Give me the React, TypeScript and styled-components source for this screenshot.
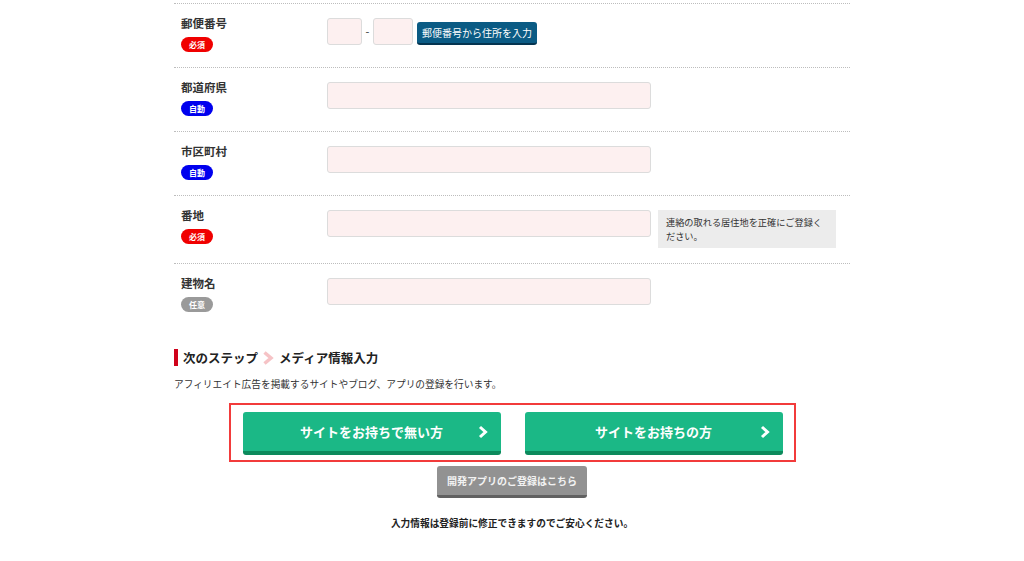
import React from "react";
import styled, { createGlobalStyle } from "styled-components";

const Global = createGlobalStyle`
  html, body { margin: 0; padding: 0; background: #fff; }
  body { font-family: "Noto Sans CJK JP", "Noto Sans", sans-serif; color: #333; }
  * { box-sizing: border-box; }
`;

const Page = styled.div`
  width: 676px;
  margin: 0 auto;
  padding-top: 3px;
  padding-bottom: 40px;
`;

const Row = styled.div`
  display: grid;
  grid-template-columns: 153px 1fr;
  border-top: 1px dotted #bdbdbd;
  padding: 14px 0 15px;
  align-items: start;
`;

const LabelCol = styled.div`
  margin-top: -3px;
  padding-left: 7px;
  display: flex;
  flex-direction: column;
  align-items: flex-start;
`;

const LabelText = styled.div`
  font-size: 11.5px;
  font-weight: 700;
  line-height: 16px;
  color: #333;
`;

const badgeColors = { req: "#f00000", auto: "#0000ee", opt: "#9a9a9a" };

const Badge = styled.span<{ $kind: keyof typeof badgeColors }>`
  margin-top: 6px;
  display: inline-flex;
  align-items: center;
  justify-content: center;
  width: 32px;
  height: 15px;
  border-radius: 8px;
  background: ${(p) => badgeColors[p.$kind]};
  color: #fff;
  font-size: 8px;
  font-weight: 700;
  line-height: 1;
`;

const FieldCol = styled.div`
  display: flex;
  align-items: flex-start;
  gap: 7px;
`;

const ZipLine = styled.div`
  display: flex;
  align-items: flex-end;
`;

const Input = styled.div<{ $w: number }>`
  width: ${(p) => p.$w}px;
  height: 27px;
  background: #fdf0f0;
  border: 1px solid #dcdcdc;
  border-radius: 3px;
  flex: none;
`;

const Dash = styled.span`
  width: 11px;
  text-align: center;
  font-size: 11px;
  line-height: 27px;
  align-self: flex-start;
  color: #333;
`;

const ZipButton = styled.button`
  margin-left: 4px;
  height: 23px;
  padding: 0 5px;
  background: #0b5b84;
  border: none;
  border-bottom: 2px solid #043450;
  border-radius: 3px;
  color: #fff;
  font-family: inherit;
  font-size: 10px;
  line-height: 21px;
  white-space: nowrap;
`;

const Note = styled.div`
  width: 178px;
  background: #ececec;
  padding: 5px 12px 5px 8px;
  font-size: 9.2px;
  line-height: 14px;
  color: #333;
`;

const Heading = styled.h2`
  margin: 22px 0 0;
  display: flex;
  align-items: center;
  font-size: 12.5px;
  font-weight: 700;
  color: #222;
  line-height: 17px;
  border-left: 4px solid #d0021b;
  padding-left: 5px;
  height: 17px;
`;

const Chevron = styled.svg`
  margin: 0 5px 0 4px;
`;

const Desc = styled.p`
  margin: 11px 0 0;
  font-size: 9.7px;
  line-height: 14px;
  color: #333;
`;

const Highlight = styled.div`
  margin: 12px auto 0;
  width: 567px;
  border: 2px solid #f23b3b;
  padding: 7px 11px 5px 12px;
  display: flex;
  justify-content: space-between;
`;

const GreenButton = styled.button`
  position: relative;
  width: 258px;
  height: 43px;
  background: #1bb886;
  border: none;
  border-bottom: 4px solid #0c8a5c;
  border-radius: 3px;
  color: #fff;
  font-family: inherit;
  font-size: 13px;
  font-weight: 700;
  display: flex;
  align-items: center;
  justify-content: center;
  padding: 0;
`;

const Arrow = styled.svg`
  position: absolute;
  right: 13px;
  top: 50%;
  transform: translateY(-50%);
`;

const Center = styled.div`
  display: flex;
  flex-direction: column;
  align-items: center;
`;

const GrayButton = styled.button`
  margin-top: 4px;
  width: 150px;
  height: 32px;
  background: #929292;
  border: none;
  border-bottom: 3px solid #616161;
  border-radius: 3px;
  color: #f2f2f2;
  font-family: inherit;
  font-size: 10px;
  font-weight: 700;
  padding: 0;
`;

const Footer = styled.p`
  margin: 18px 0 0;
  font-size: 9.7px;
  font-weight: 700;
  color: #222;
  line-height: 14px;
`;

const ChevronRight = () => (
  <Arrow width="10" height="13" viewBox="0 0 10 13">
    <path d="M2 1.5 L7.5 6.5 L2 11.5" fill="none" stroke="#fff" strokeWidth="3" />
  </Arrow>
);

export default function App() {
  return (
    <>
      <Global />
      <Page>
        <Row>
          <LabelCol>
            <LabelText>郵便番号</LabelText>
            <Badge $kind="req">必須</Badge>
          </LabelCol>
          <FieldCol>
            <ZipLine>
              <Input $w={35} />
              <Dash>-</Dash>
              <Input $w={40} />
              <ZipButton>郵便番号から住所を入力</ZipButton>
            </ZipLine>
          </FieldCol>
        </Row>
        <Row>
          <LabelCol>
            <LabelText>都道府県</LabelText>
            <Badge $kind="auto">自動</Badge>
          </LabelCol>
          <FieldCol>
            <Input $w={324} />
          </FieldCol>
        </Row>
        <Row>
          <LabelCol>
            <LabelText>市区町村</LabelText>
            <Badge $kind="auto">自動</Badge>
          </LabelCol>
          <FieldCol>
            <Input $w={324} />
          </FieldCol>
        </Row>
        <Row>
          <LabelCol>
            <LabelText>番地</LabelText>
            <Badge $kind="req">必須</Badge>
          </LabelCol>
          <FieldCol>
            <Input $w={324} />
            <Note>連絡の取れる居住地を正確にご登録ください。</Note>
          </FieldCol>
        </Row>
        <Row>
          <LabelCol>
            <LabelText>建物名</LabelText>
            <Badge $kind="opt">任意</Badge>
          </LabelCol>
          <FieldCol>
            <Input $w={324} />
          </FieldCol>
        </Row>

        <Heading>
          次のステップ
          <Chevron width="12" height="14" viewBox="0 0 12 14">
            <path d="M2.5 1.5 L9 7 L2.5 12.5" fill="none" stroke="#f6c3c6" strokeWidth="3.5" />
          </Chevron>
          メディア情報入力
        </Heading>
        <Desc>アフィリエイト広告を掲載するサイトやブログ、アプリの登録を行います。</Desc>

        <Highlight>
          <GreenButton>
            サイトをお持ちで無い方
            <ChevronRight />
          </GreenButton>
          <GreenButton>
            サイトをお持ちの方
            <ChevronRight />
          </GreenButton>
        </Highlight>

        <Center>
          <GrayButton>開発アプリのご登録はこちら</GrayButton>
          <Footer>入力情報は登録前に修正できますのでご安心ください。</Footer>
        </Center>
      </Page>
    </>
  );
}
